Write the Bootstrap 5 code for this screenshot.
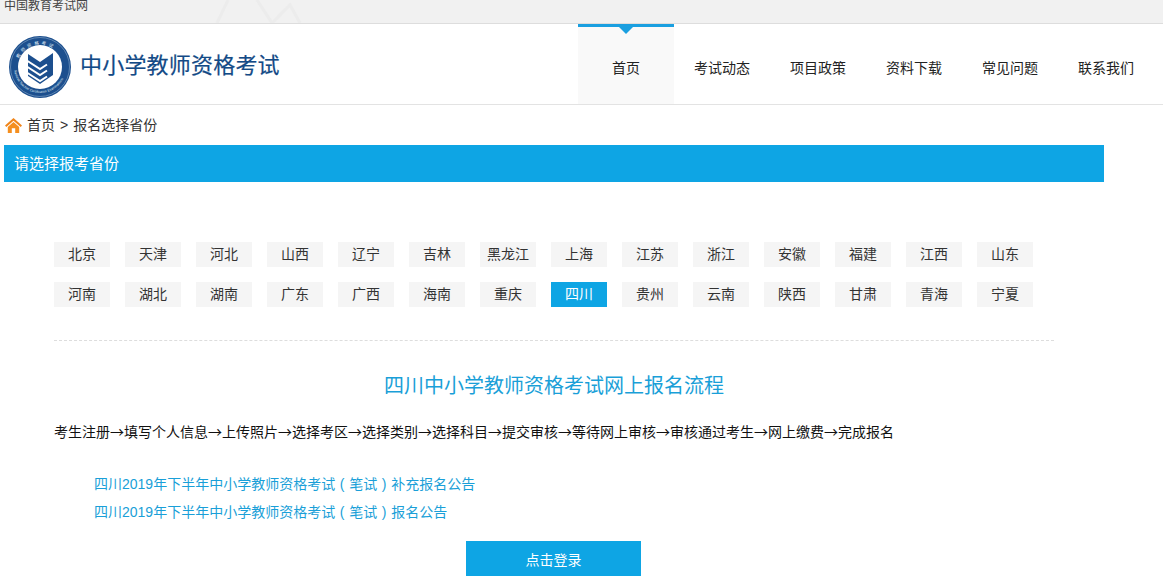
<!DOCTYPE html>
<html lang="zh-CN">

<head>
    <meta charset="UTF-8">
    <meta name="viewport" content="width=device-width, initial-scale=1.0">
    <title>中小学教师资格考试</title>
    <link href="https://cdn.jsdelivr.net/npm/bootstrap@5.3.0/dist/css/bootstrap.min.css" rel="stylesheet">
    <style>
        body {
            font-family: "Liberation Sans", "Noto Sans CJK SC", sans-serif;
            font-size: 14px;
            color: #333;
            background: #fff;
        }

        .top-strip {
            height: 24px;
            background: #f1f1f1;
            border-bottom: 1px solid #ddd;
            font-size: 12px;
            line-height: 12px;
            color: #444;
            padding-left: 4px;
            overflow: hidden;
            position: relative;
        }

        .top-deco {
            position: absolute;
            left: 200px;
            top: 0;
        }

        .site-head {
            height: 81px;
            border-bottom: 1px solid #e3e3e3;
        }

        .site-title {
            font-size: 22px;
            line-height: 1;
            letter-spacing: .2px;
            color: #134a86;
            margin-left: 9px;
            margin-top: 4px;
            -webkit-text-stroke: .2px #134a86;
        }

        .logo-wrap {
            margin-left: 9px;
            margin-top: 6px;
            line-height: 0;
        }

        .head-nav {
            margin-right: 9px;
        }

        .head-nav a {
            display: block;
            width: 96px;
            height: 80px;
            line-height: 83px;
            text-align: center;
            color: #222;
            text-decoration: none;
            border-top: 3px solid transparent;
            position: relative;
        }

        .head-nav a.on {
            background: #f9f9f9;
            border-top-color: #1a9fe0;
        }

        .head-nav a.on::after {
            content: "";
            position: absolute;
            left: 41px;
            top: 0;
            border: 7px solid transparent;
            border-top-color: #1a9fe0;
            border-bottom-width: 0;
        }

        .crumbs {
            height: 40px;
            padding-left: 5px;
            color: #333;
            padding-top: 1px;
        }

        .crumbs a {
            color: #333;
            text-decoration: none;
        }

        .crumbs svg {
            margin-right: 5px;
        }

        .crumb-sep {
            margin: 0 5px;
        }

        .pick-bar {
            width: 1100px;
            height: 37px;
            margin-left: 4px;
            padding-left: 10px;
            line-height: 37px;
            background: #0ea5e4;
            color: #fff;
            font-size: 15px;
        }

        .main-box {
            width: 1000px;
            margin: 60px 0 0 54px;
        }

        .prov-grid {
            gap: 15px;
            padding-bottom: 33px;
            border-bottom: 1px dashed #ddd;
        }

        .prov-btn {
            width: 56px;
            height: 25px;
            line-height: 25px;
            text-align: center;
            background: #f5f5f5;
            color: #333;
            text-decoration: none;
        }

        .prov-btn.on {
            background: #0ea5e4;
            color: #fff;
        }

        .flow-title {
            margin: 30px 0 0;
            font-size: 20px;
            line-height: 30px;
            font-weight: 400;
            text-align: center;
            color: #1a9fd8;
        }

        .flow-text {
            margin: 20px 0 0;
            line-height: 20px;
            color: #111;
            font-family: "Noto Sans CJK SC", sans-serif;
        }

        .notice-list {
            margin: 29px 0 0 40px;
        }

        .notice-list a {
            display: block;
            height: 28px;
            line-height: 28px;
            color: #1a9fd8;
            text-decoration: none;
        }

        .mid-paren {
            display: inline-block;
            width: 14px;
            text-align: center;
        }

        .login-btn {
            display: block;
            width: 175px;
            height: 35px;
            margin: 15px 0 0 412px;
            line-height: 38px;
            text-align: center;
            background: #0ea5e4;
            color: #fff;
            text-decoration: none;
        }
    </style>
</head>

<body>

    <div class="top-strip">
        中国教育考试网
        <svg class="top-deco" width="110" height="23" fill="none" stroke="#ececec" stroke-width="3">
            <path d="M17 23L28 0" />
            <path d="M57 0L72 23L90 5L100 23" />
        </svg>
    </div>

    <header class="site-head d-flex justify-content-between">
        <div class="d-flex align-items-center">
            <div class="logo-wrap">
                <svg width="62" height="62" viewBox="0 0 62 62">
                    <defs>
                        <path id="ringTop" d="M8.500 31a22.500 22.500 0 0 1 45 0" />
                        <path id="ringBottom" d="M5 31a26 26 0 0 0 52 0" />
                    </defs>
                    <circle cx="31" cy="31" r="31" fill="#1c4f8e" />
                    <circle cx="31" cy="31" r="29.500" fill="none" stroke="#6f93bb" stroke-width=".8" />
                    <circle cx="31" cy="31" r="22" fill="#fff" />
                    <path d="M19 18L31 26L44 17V39L31 48L19 40Z" fill="#1c4f8e" />
                    <path d="M17 24L31 33L38 28.500M17 30L31 39L38 34.500M17 36L31 45L38 40.500" fill="none" stroke="#fff" stroke-width="2" />
                    <text font-size="4.500" fill="#dfe8f2" font-family="Noto Sans CJK SC, sans-serif" letter-spacing="2.500"><textPath href="#ringTop" startOffset="12%">教师资格考试</textPath></text>
                    <text font-size="3.400" fill="#dfe8f2" font-family="Liberation Sans, sans-serif"><textPath href="#ringBottom" startOffset="4%">National Teacher Certification Examinations</textPath></text>
                </svg>
            </div>
            <div class="site-title">中小学教师资格考试</div>
        </div>
        <nav class="head-nav d-flex">
            <a class="on" href="#">首页</a>
            <a href="#">考试动态</a>
            <a href="#">项目政策</a>
            <a href="#">资料下载</a>
            <a href="#">常见问题</a>
            <a href="#">联系我们</a>
        </nav>
    </header>

    <div class="crumbs d-flex align-items-center">
        <svg width="17" height="15" viewBox="0 0 17 15">
            <path d="M8.500 0L0 7.500L1.300 9L8.500 2.800L15.700 9L17 7.500Z" fill="#f0851a" />
            <path d="M8.500 4L2.800 9V15H6.800V10.300H10.200V15H14.200V9Z" fill="#f58f1f" />
        </svg>
        <span><a href="#">首页</a><span class="crumb-sep">&gt;</span>报名选择省份</span>
    </div>

    <div class="pick-bar">请选择报考省份</div>

    <main class="main-box">
        <div class="prov-grid d-flex flex-wrap" id="provGrid"></div>

        <h2 class="flow-title">四川中小学教师资格考试网上报名流程</h2>
        <p class="flow-text">考生注册→填写个人信息→上传照片→选择考区→选择类别→选择科目→提交审核→等待网上审核→审核通过考生→网上缴费→完成报名</p>

        <div class="notice-list">
            <a href="#">四川2019年下半年中小学教师资格考试<span class="mid-paren">(</span>笔试<span class="mid-paren">)</span>补充报名公告</a>
            <a href="#">四川2019年下半年中小学教师资格考试<span class="mid-paren">(</span>笔试<span class="mid-paren">)</span>报名公告</a>
        </div>

        <a class="login-btn" href="#">点击登录</a>
    </main>

    <script src="https://cdn.jsdelivr.net/npm/bootstrap@5.3.0/dist/js/bootstrap.bundle.min.js"></script>
    <script>
        const provinces = ['北京', '天津', '河北', '山西', '辽宁', '吉林', '黑龙江', '上海', '江苏', '浙江', '安徽', '福建', '江西', '山东',
            '河南', '湖北', '湖南', '广东', '广西', '海南', '重庆', '四川', '贵州', '云南', '陕西', '甘肃', '青海', '宁夏'];
        const grid = document.getElementById('provGrid');
        provinces.forEach(name => {
            const item = document.createElement('a');
            item.href = '#';
            item.className = 'prov-btn' + (name === '四川' ? ' on' : '');
            item.textContent = name;
            grid.appendChild(item);
        });
    </script>

</body>

</html>
